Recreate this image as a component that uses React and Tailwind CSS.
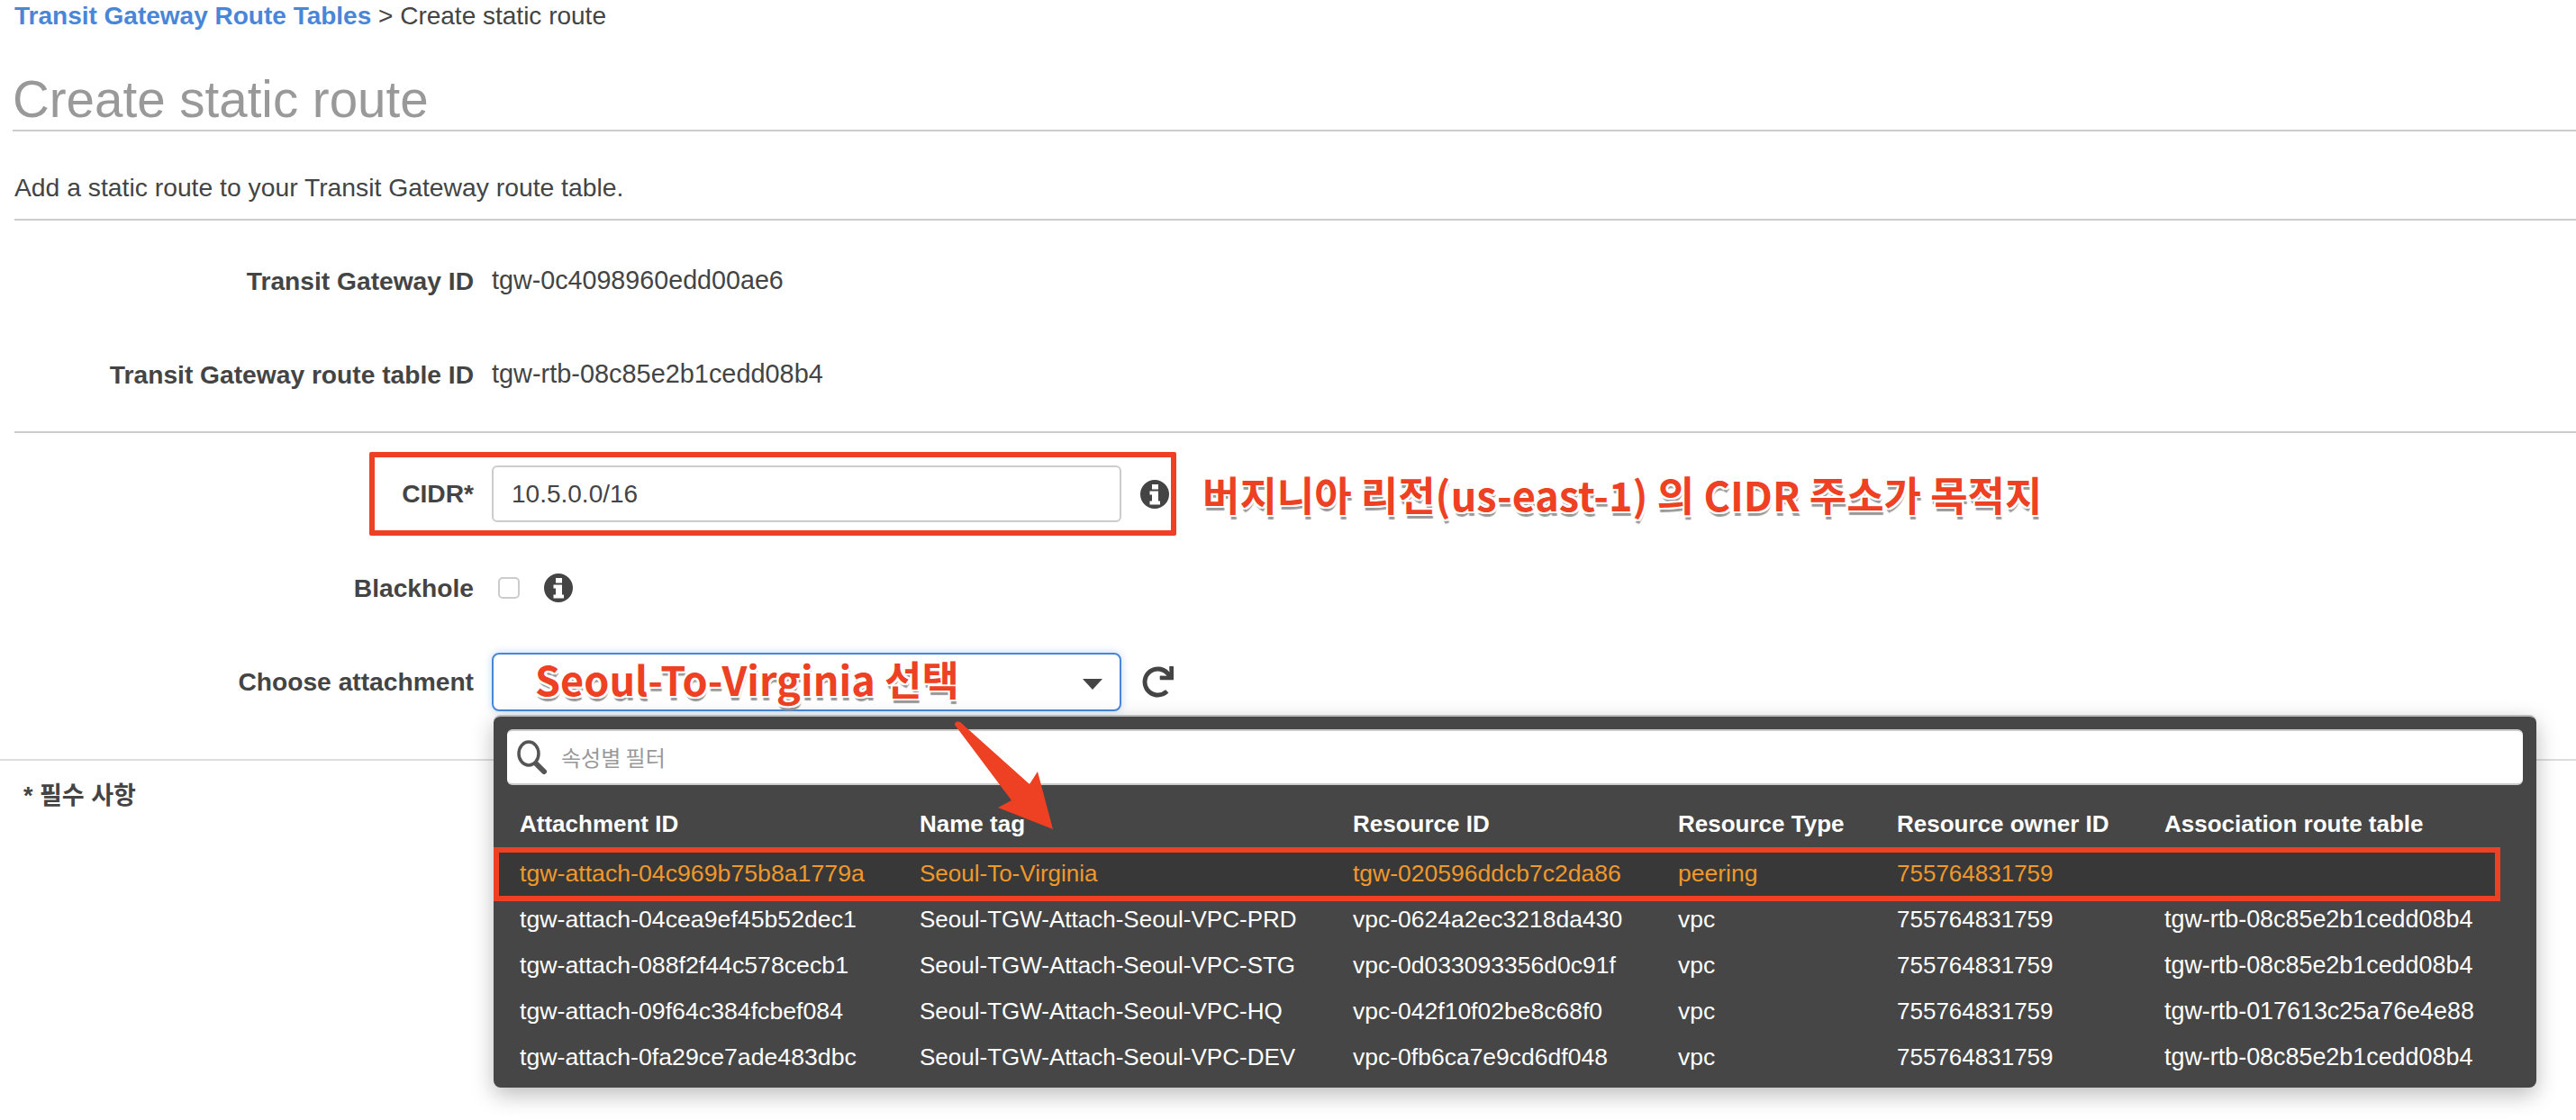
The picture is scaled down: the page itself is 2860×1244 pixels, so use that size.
import { FaRedo } from 'react-icons/fa';

const routes = [
  ['tgw-attach-04c969b75b8a1779a', 'Seoul-To-Virginia', 'tgw-020596ddcb7c2da86', 'peering', '755764831759', ''],
  ['tgw-attach-04cea9ef45b52dec1', 'Seoul-TGW-Attach-Seoul-VPC-PRD', 'vpc-0624a2ec3218da430', 'vpc', '755764831759', 'tgw-rtb-08c85e2b1cedd08b4'],
  ['tgw-attach-088f2f44c578cecb1', 'Seoul-TGW-Attach-Seoul-VPC-STG', 'vpc-0d033093356d0c91f', 'vpc', '755764831759', 'tgw-rtb-08c85e2b1cedd08b4'],
  ['tgw-attach-09f64c384fcbef084', 'Seoul-TGW-Attach-Seoul-VPC-HQ', 'vpc-042f10f02be8c68f0', 'vpc', '755764831759', 'tgw-rtb-017613c25a76e4e88'],
  ['tgw-attach-0fa29ce7ade483dbc', 'Seoul-TGW-Attach-Seoul-VPC-DEV', 'vpc-0fb6ca7e9cd6df048', 'vpc', '755764831759', 'tgw-rtb-08c85e2b1cedd08b4'],
];

const headers = ['Attachment ID', 'Name tag', 'Resource ID', 'Resource Type', 'Resource owner ID', 'Association route table'];
const columns = 'grid grid-cols-[444px_481px_361px_243px_297px_1fr]';
const cellSizes = ['text-[26.7px]', 'text-[26px]', 'text-[26.5px]', 'text-[26.5px]', 'text-[26px]', 'text-[26.9px]'];
const annotation =
  "font-['Noto_Sans_CJK_KR',sans-serif] font-bold text-[#ee4023] whitespace-nowrap [text-shadow:2px_0_0_#fff,-2px_0_0_#fff,0_-2px_0_#fff,0_2px_0_#fff,2px_2px_0_#fff,-2px_2px_0_#fff,2px_-2px_0_#fff,-2px_-2px_0_#fff,1px_5px_1px_#999]";

function Label({ children }) {
  return <div className="w-[526px] shrink-0 text-right font-bold text-[28.2px]">{children}</div>;
}

function InfoIcon({ className }) {
  return (
    <svg width="32" height="32" viewBox="0 0 32 32" className={`shrink-0 ${className}`}>
      <path
        fillRule="evenodd"
        fill="#444"
        d="M16 0a16 16 0 1 0 0 32a16 16 0 1 0 0-32zM13 5h7v5.5h-7zM10.5 12.5h9.5v11h2v4h-11.5v-4h2.5v-7h-2.5z"
      />
    </svg>
  );
}

export default function App() {
  return (
    <div className="relative w-[2860px] h-[1244px] overflow-hidden bg-white text-[#444] text-[28px] font-['Liberation_Sans','Noto_Sans_CJK_KR',sans-serif]">
      <div className="h-[36px] pl-[16px] flex items-center whitespace-pre">
        <span className="font-bold text-[#4a86d8]">Transit Gateway Route Tables</span>
        <span> &gt; Create static route</span>
      </div>

      <div className="h-[110px] ml-[14px] border-b-2 border-[#ccc] flex items-end pb-[5px]">
        <h1 className="text-[56.5px] leading-none text-[#999]">Create static route</h1>
      </div>

      <div className="h-[97px] pt-[28px] pl-[16px] flex items-center text-[28.3px]">Add a static route to your Transit Gateway route table.</div>

      <div className="ml-[16px] border-t-2 border-[#ccc]" />

      <div className="pt-[41px] pb-[37px] border-b-2 border-[#ccc] ml-[16px]">
        <div className="h-[52px] flex items-center gap-[20px] -ml-[16px]">
          <Label>Transit Gateway ID</Label>
          <span className="text-[28.7px]">tgw-0c4098960edd00ae6</span>
        </div>
        <div className="h-[52px] mt-[52px] flex items-center gap-[20px] -ml-[16px]">
          <Label>Transit Gateway route table ID</Label>
          <span className="text-[28.9px]">tgw-rtb-08c85e2b1cedd08b4</span>
        </div>
      </div>

      <div className="pt-[36px] pb-[53px] border-b-2 border-[#ddd]">
        <div className="relative flex items-center gap-[20px] h-[63px]">
          <div className="absolute left-[410px] -top-[15px] w-[896px] h-[93px] border-[6px] border-[#ee4023] rounded-[2px]" />
          <Label>CIDR*</Label>
          <div className="w-[699px] h-[63px] flex items-center pl-[20px] border-2 border-[#ccc] rounded-[6px]">10.5.0.0/16</div>
          <InfoIcon className="ml-[1px]" />
          <div className={`${annotation} ml-[17px] text-[45px] leading-none`}>버지니아 리전(us-east-1) 의 CIDR 주소가 목적지</div>
        </div>

        <div className="h-[48px] mt-[49px] flex items-center gap-[20px]">
          <Label>Blackhole</Label>
          <div className="ml-[7px] w-[24px] h-[24px] border-2 border-[#ccc] rounded-[5px]" />
          <InfoIcon className="ml-[7px]" />
        </div>

        <div className="relative mt-[48px] flex items-center gap-[20px] h-[65px]">
          <Label>Choose attachment</Label>
          <div className="relative w-[699px] h-[65px] flex items-center pl-[46px] border-2 border-[#4a86d8] rounded-[8px] shadow-[0_0_10px_#4a86d855]">
            <span className={`${annotation} text-[45px] leading-none -mt-[8px]`}>Seoul-To-Virginia 선택</span>
            <div className="absolute right-[19px] top-[27px] w-0 h-0 border-x-[11px] border-x-transparent border-t-[12px] border-t-[#444]" />

            <div className="absolute left-0 top-[67px] z-10 w-[2268px] h-[414px] bg-[#464646] rounded-[8px] border-t-2 border-[#bbb] shadow-[0_8px_24px_#0004] text-white">
              <div className="mx-[15px] mt-[14px] h-[62px] bg-white rounded-[6px] border-y-2 border-[#ccc] flex items-center pl-[10px] gap-[16px]">
                <svg width="34" height="38" viewBox="0 0 34 38" fill="none" stroke="#555" className="shrink-0">
                  <ellipse cx="14" cy="15" rx="11" ry="13" strokeWidth="3.5" />
                  <path d="M22 26l9 9" strokeWidth="6" strokeLinecap="round" />
                </svg>
                <span className="text-[#999] text-[24px] font-['Noto_Sans_CJK_KR',sans-serif]">속성별 필터</span>
              </div>

              <div className={`${columns} h-[40px] mt-[23px] pl-[29px] items-center font-bold text-[26px]`}>
                {headers.map((h) => (
                  <div key={h} className="whitespace-nowrap">{h}</div>
                ))}
              </div>

              <div className="mt-[10px]">
                {routes.map((row, i) => (
                  <div key={row[0]} className={`relative ${columns} h-[51px] pl-[29px] items-center whitespace-nowrap ${i === 0 ? 'text-[#f0982c]' : ''}`}>
                    {i === 0 && <div className="absolute left-0 -top-[4px] -bottom-[5px] w-[2228px] bg-[#383838] border-[6px] border-[#ee4023]" />}
                    {row.map((cell, j) => (
                      <div key={j} className={`relative ${cellSizes[j]}`}>{cell}</div>
                    ))}
                  </div>
                ))}
              </div>
            </div>
          </div>
          <FaRedo className="ml-[3px] text-[#444] text-[35px]" />
        </div>
      </div>

      <div className="h-[78px] pl-[26px] flex items-center font-bold text-[27px]">* 필수 사항</div>

      <svg className="absolute left-[1055px] top-[795px] z-20" width="125" height="135" viewBox="1055 795 125 135">
        <path d="M1060 805 Q1060 800 1066 802 L1143 871 L1152 857 L1169 921 L1108 897 L1123 889 Z" fill="#ee4023" />
      </svg>
    </div>
  );
}
